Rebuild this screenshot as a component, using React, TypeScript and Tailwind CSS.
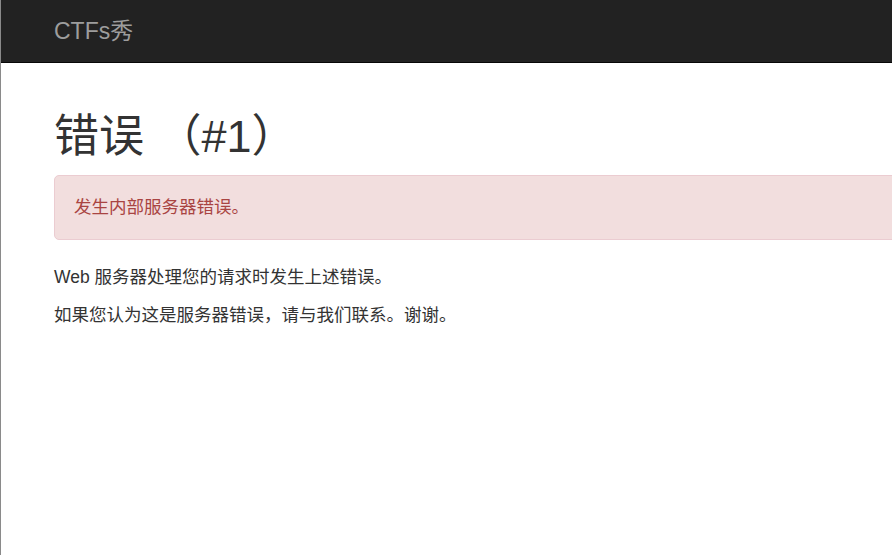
export default function App() {
  return (
    <div
      className="min-h-screen overflow-hidden border-l border-[#8a8a8a] bg-white text-[#333]"
      style={{ fontFamily: '"Liberation Sans", "Noto Sans CJK SC", sans-serif' }}
    >
      {/* Navbar */}
      <nav className="h-[63px] border-b border-[#080808] bg-[#222]">
        <div className="flex h-full items-center pl-[53px]">
          <span className="text-[23px] leading-[25px] text-[#9d9d9d]">CTFs秀</span>
        </div>
      </nav>

      {/* Content */}
      <div className="w-[1300px] pl-[53px] pt-[49px]">
        <h1 className="mb-[13px] text-[45px] leading-[50px] font-normal text-[#333]">错误 （#1）</h1>
        <div className="mb-[25px] rounded-[5px] border border-[#ebccd1] bg-[#f2dede] px-[19px] py-[19px] text-[17.5px] leading-[25px] text-[#a94442]">
          发生内部服务器错误。
        </div>
        <p className="mb-[13px] text-[17.5px] leading-[25px]">Web 服务器处理您的请求时发生上述错误。</p>
        <p className="text-[17.5px] leading-[25px]">如果您认为这是服务器错误，请与我们联系。谢谢。</p>
      </div>
    </div>
  );
}
